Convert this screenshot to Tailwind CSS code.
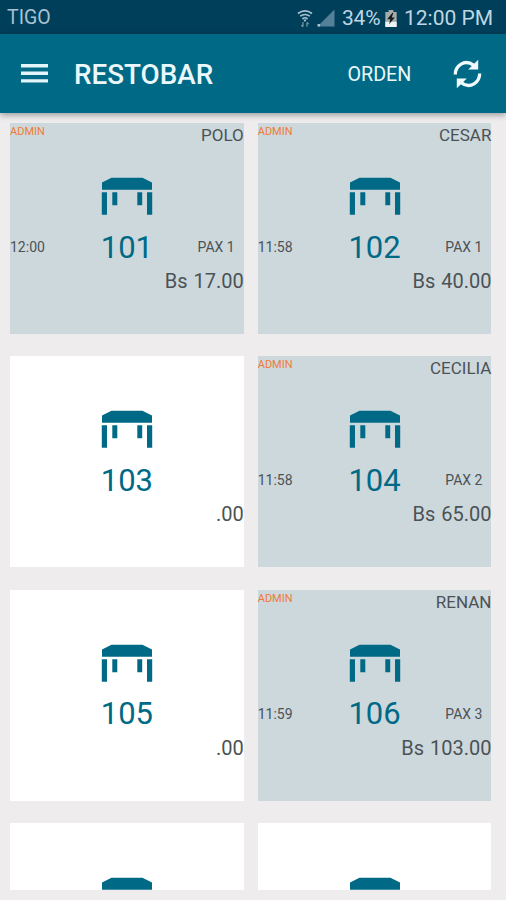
<!DOCTYPE html>
<html lang="es">
<head>
<meta charset="utf-8">
<title>RESTOBAR</title>
<script src="https://cdn.jsdelivr.net/npm/@tailwindcss/browser@4"></script>
</head>
<body class="w-[506px] h-[900px] overflow-hidden bg-[#eeeced] font-[Roboto,sans-serif] flex flex-col">
<svg class="hidden">
  <symbol id="table" viewBox="0 0 52 39"><path d="M1 12.8V5.6L10.5 .7H41.5L51 5.6V12.8ZM.8 15.3H6V37.8H.8ZM11.3 15.3H16.3V28.2H11.3ZM36.3 15.3H41.2V28.2H36.3ZM46 15.3H51.2V37.8H46Z" fill="#006a86"/></symbol>
</svg>
<div class="h-[34px] shrink-0 bg-[#003f5a] text-[#bfd6e3] flex items-center pt-[2px] pl-[7px] pr-[12px] text-[20px] leading-none whitespace-nowrap">
  <span class="text-[19.5px] text-[#a9c3d2]">TIGO</span>
  <svg class="ml-auto w-[16px] h-[19px]" viewBox="0 0 16 19" fill="none" stroke="#a9c3d2" stroke-width="1.6"><path d="M1 4.5Q8-.8 15 4.5M3.2 7.2Q8 3.7 12.8 7.2M5.4 9.8Q8 7.8 10.6 9.8"/><path d="M6.2 10.5H9.8L8 13Z" fill="#a9c3d2" stroke="none"/><path d="M6 13V17.5M4.4 16L6 17.8M10 17.8V13.5M10 13.5L11.6 15.2" stroke-width="1.2" stroke="#7898ab"/></svg>
  <svg class="ml-[4px] w-[18px] h-[18px]" viewBox="0 0 18 18"><path d="M17.5 .5V17.5H.5Z" fill="#54809a"/><path d="M.5 15H3V17.5H.5Z" fill="#a9c3d2"/></svg>
  <span class="ml-[7px] w-[39px] text-[21px] tracking-[-0.2px]">34%</span>
  <svg class="ml-[4px] w-[12px] h-[17px]" viewBox="0 0 12 18"><path d="M3.5 0H8.5V2H12V18H0V2H3.5Z" fill="#a5aca9"/><path d="M0 12.5H12V18H0Z" fill="#eef4f6"/><path d="M7.5 3L2 9.8H5.3L4 15L10 8H6.8L8.5 3Z" fill="#151b1d"/></svg>
  <span class="ml-[7px] w-[90px] text-[21px]">12:00 PM</span>
</div>
<header class="h-[79px] shrink-0 bg-[#006a86] text-[#eaf8fc] flex items-center pl-[20.5px] pr-[24px] relative z-10 shadow-[0_2px_6px_rgba(0,0,0,0.35)]">
  <svg class="w-[27px] h-[19px]" viewBox="0 0 27 19"><path d="M0 0H27V3.4H0ZM0 7.6H27V11H0ZM0 15.2H27V18.6H0Z" fill="#e3f5fa"/></svg>
  <h1 class="ml-[26.5px] mt-[3px] text-[27.8px] font-medium leading-none">RESTOBAR</h1>
  <span class="ml-auto mt-[2px] text-[19.7px] leading-none w-[65px]">ORDEN</span>
  <svg class="ml-[40.5px] w-[29px] h-[30px]" viewBox="0 0 29 30" fill="none" stroke="#f1fbfd" stroke-width="3.3"><path d="M2.3 15.5C2.3 7 11.5-.4 20.5 6.1M26.7 14.5C26.7 23 17.5 30.4 8.5 23.9"/><path d="M25.2 .8V10.5H15.2ZM3.8 29.2V19.5H13.8Z" fill="#f1fbfd" stroke="none"/></svg>
</header>
<main class="h-[777px] shrink-0 overflow-hidden pt-[10px] pl-[10px] pr-[14.6px] text-[#4b5255]">
  <div class="grid grid-cols-2 gap-x-[14px] gap-y-[22.4px] auto-rows-[211px]">
    <section class="bg-[#cdd8dd] flex flex-col">
      <div class="h-[54px] flex justify-between items-start leading-none"><span class="text-[11px] mt-[3px] text-[#f07a35]">ADMIN</span><span class="text-[17px] mt-[4px]">POLO</span></div>
      <svg class="w-[52px] h-[39px] self-center"><use href="#table"/></svg>
      <div class="h-[62px] grid grid-cols-3 items-center leading-none"><span class="text-[14px]">12:00</span><span class="text-[31px] text-center text-[#006a86]">101</span><span class="text-[14px] text-right pr-[9px]">PAX 1</span></div>
      <div class="-mt-[7px] text-[20px] leading-[20px] text-right [word-spacing:1px]">Bs 17.00</div>
    </section>
    <section class="bg-[#cdd8dd] flex flex-col">
      <div class="h-[54px] flex justify-between items-start leading-none"><span class="text-[11px] mt-[3px] text-[#f07a35]">ADMIN</span><span class="text-[17px] mt-[4px]">CESAR</span></div>
      <svg class="w-[52px] h-[39px] self-center"><use href="#table"/></svg>
      <div class="h-[62px] grid grid-cols-3 items-center leading-none"><span class="text-[14px]">11:58</span><span class="text-[31px] text-center text-[#006a86]">102</span><span class="text-[14px] text-right pr-[9px]">PAX 1</span></div>
      <div class="-mt-[7px] text-[20px] leading-[20px] text-right [word-spacing:1px]">Bs 40.00</div>
    </section>
    <section class="bg-white flex flex-col pt-[54px]">
      <svg class="w-[52px] h-[39px] self-center"><use href="#table"/></svg>
      <div class="h-[62px] flex justify-center items-center leading-none text-[31px] text-[#006a86]">103</div>
      <div class="-mt-[7px] text-[20px] leading-[20px] text-right">.00</div>
    </section>
    <section class="bg-[#cdd8dd] flex flex-col">
      <div class="h-[54px] flex justify-between items-start leading-none"><span class="text-[11px] mt-[3px] text-[#f07a35]">ADMIN</span><span class="text-[17px] mt-[4px]">CECILIA</span></div>
      <svg class="w-[52px] h-[39px] self-center"><use href="#table"/></svg>
      <div class="h-[62px] grid grid-cols-3 items-center leading-none"><span class="text-[14px]">11:58</span><span class="text-[31px] text-center text-[#006a86]">104</span><span class="text-[14px] text-right pr-[9px]">PAX 2</span></div>
      <div class="-mt-[7px] text-[20px] leading-[20px] text-right [word-spacing:1px]">Bs 65.00</div>
    </section>
    <section class="bg-white flex flex-col pt-[54px]">
      <svg class="w-[52px] h-[39px] self-center"><use href="#table"/></svg>
      <div class="h-[62px] flex justify-center items-center leading-none text-[31px] text-[#006a86]">105</div>
      <div class="-mt-[7px] text-[20px] leading-[20px] text-right">.00</div>
    </section>
    <section class="bg-[#cdd8dd] flex flex-col">
      <div class="h-[54px] flex justify-between items-start leading-none"><span class="text-[11px] mt-[3px] text-[#f07a35]">ADMIN</span><span class="text-[17px] mt-[4px]">RENAN</span></div>
      <svg class="w-[52px] h-[39px] self-center"><use href="#table"/></svg>
      <div class="h-[62px] grid grid-cols-3 items-center leading-none"><span class="text-[14px]">11:59</span><span class="text-[31px] text-center text-[#006a86]">106</span><span class="text-[14px] text-right pr-[9px]">PAX 3</span></div>
      <div class="-mt-[7px] text-[20px] leading-[20px] text-right [word-spacing:1px]">Bs 103.00</div>
    </section>
    <section class="bg-white flex flex-col pt-[54px]">
      <svg class="w-[52px] h-[39px] self-center"><use href="#table"/></svg>
    </section>
    <section class="bg-white flex flex-col pt-[54px]">
      <svg class="w-[52px] h-[39px] self-center"><use href="#table"/></svg>
    </section>
  </div>
</main>
</body>
</html>
